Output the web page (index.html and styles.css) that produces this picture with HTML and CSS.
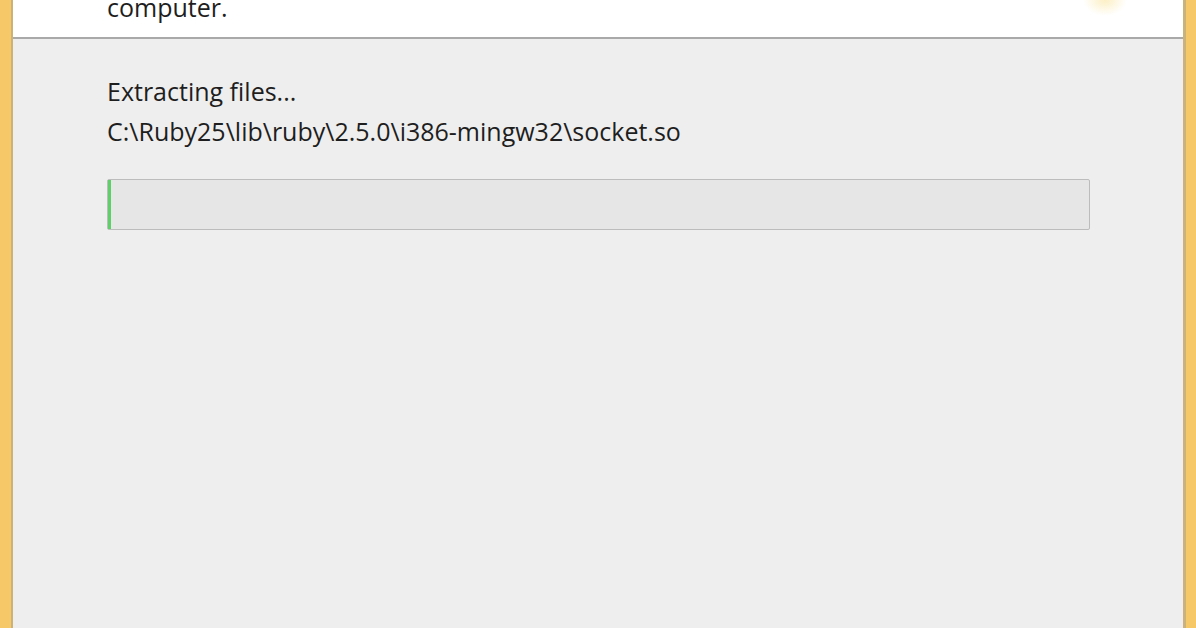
FILE: index.html
```html
<!DOCTYPE html>
<html lang="en">
<head>
    <meta charset="UTF-8">
    <title>Setup - Installing</title>
    <link rel="stylesheet" href="styles.css">
</head>
<body>
    <div class="window">
        <div class="frame left"></div>
        <div class="dialog">
            <div class="header">
                <div class="header-text">computer.</div>
                <div class="header-icon"></div>
            </div>
            <div class="content">
                <div class="status">Extracting files...</div>
                <div class="filename">C:\Ruby25\lib\ruby\2.5.0\i386-mingw32\socket.so</div>
                <div class="progress">
                    <div class="progress-fill"></div>
                </div>
            </div>
        </div>
        <div class="frame right"></div>
    </div>
</body>
</html>
```

FILE: styles.css
```css
html, body {
    margin: 0;
    height: 100%;
}

body {
    font-family: "Open Sans", "Noto Sans", Arial, sans-serif;
    color: #1e1e1e;
    background-color: #eeeeee;
    overflow: hidden;
}

.window {
    display: flex;
    height: 100%;
}

.frame {
    width: 11px;
    background-color: #f6c867;
    flex-shrink: 0;
}

.frame.left {
    border-right: 2px solid #c9b37a;
    box-shadow: 1px 0 0 #fdf6df;
}

.frame.right {
    width: 10px;
    border-left: 3px solid #c9b37a;
    box-shadow: -1px 0 0 #f3eaf3;
}

.dialog {
    flex: 1;
    display: flex;
    flex-direction: column;
}

/* white top band, only the tail of the description is visible */
.header {
    position: relative;
    height: 39px;
    background-color: #ffffff;
    border-bottom: 2px solid #a9a9a9;
    display: flex;
    align-items: flex-end;
    padding: 0 0 17px 94px;
    box-sizing: border-box;
    overflow: hidden;
}

.header-text {
    font-size: 25px;
    line-height: 26px;
}

.header-icon {
    position: absolute;
    right: 56px;
    top: -4px;
    width: 44px;
    height: 20px;
    background: radial-gradient(ellipse at 50% 20%, #fcefc4, rgba(255, 255, 255, 0) 70%);
}

.content {
    flex: 1;
    padding: 32px 93px 0 94px;
    font-size: 25px;
    line-height: 40px;
    background-color: #eeeeee;
}

.progress {
    margin-top: 28px;
    height: 49px;
    border: 1px solid #bcbcbc;
    border-radius: 2px;
    background-color: #e6e6e6;
}

.progress-fill {
    width: 3px;
    height: 100%;
    background-color: #5fcf6a;
}
```
